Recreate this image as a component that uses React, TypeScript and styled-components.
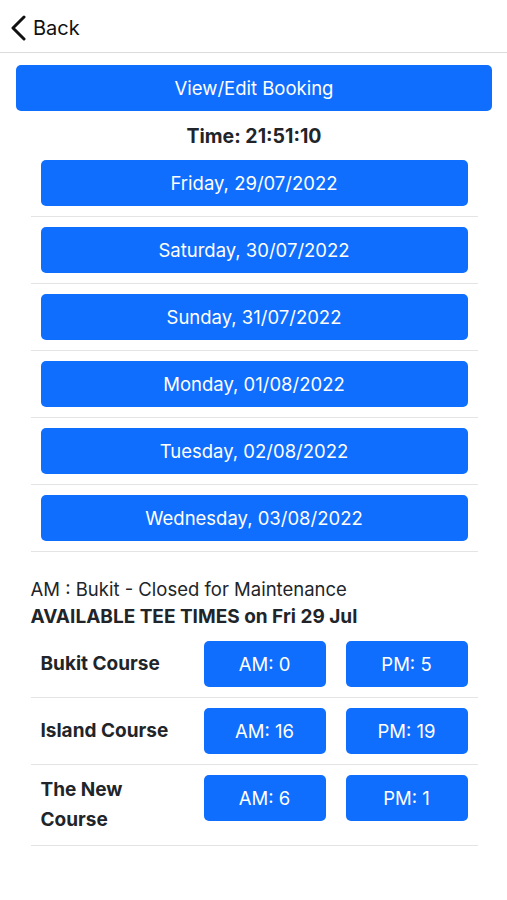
import styled, { createGlobalStyle } from "styled-components";

const GlobalStyle = createGlobalStyle`
  body {
    margin: 0;
    background: #fff;
    font-family: Inter, "Liberation Sans", Arial, sans-serif;
    color: #212529;
  }
`;

const dates = [
  "Friday, 29/07/2022",
  "Saturday, 30/07/2022",
  "Sunday, 31/07/2022",
  "Monday, 01/08/2022",
  "Tuesday, 02/08/2022",
  "Wednesday, 03/08/2022",
];

const courses = [
  { name: "Bukit Course", am: 0, pm: 5 },
  { name: "Island Course", am: 16, pm: 19 },
  { name: "The New Course", am: 6, pm: 1 },
];

function App() {
  return (
    <Page>
      <GlobalStyle />
      <Header>
        <BackButton>
          <svg width="18" height="26" viewBox="0 0 18 26" fill="none">
            <path d="M14 2 L3 13 L14 24" stroke="#111" strokeWidth="3" strokeLinecap="round" strokeLinejoin="round" />
          </svg>
          Back
        </BackButton>
      </Header>
      <Content>
        <WideButton>View/Edit Booking</WideButton>
        <Clock>Time: 21:51:10</Clock>
        <List>
          {dates.map((d) => (
            <DateRow key={d}>
              <Btn>{d}</Btn>
            </DateRow>
          ))}
        </List>
        <Notice>AM : Bukit - Closed for Maintenance</Notice>
        <Heading>AVAILABLE TEE TIMES on Fri 29 Jul</Heading>
        <List>
          {courses.map((c) => (
            <CourseRow key={c.name}>
              <CourseName>
                <span>{c.name}</span>
              </CourseName>
              <SlotButton>AM: {c.am}</SlotButton>
              <SlotButton>PM: {c.pm}</SlotButton>
            </CourseRow>
          ))}
        </List>
      </Content>
    </Page>
  );
}

const Page = styled.div`
  width: 507px;
  min-height: 900px;
`;

const Header = styled.div`
  height: 53px;
  border-bottom: 1px solid #dcdcdc;
  display: flex;
  align-items: center;
  padding-left: 10px;
  box-sizing: border-box;
`;

const BackButton = styled.div`
  display: flex;
  align-items: center;
  gap: 5px;
  font-size: 20px;
  color: #111;
  margin-top: 4px;
`;

const Content = styled.div`
  padding: 12px 15px 0 16px;
  display: flex;
  flex-direction: column;
  align-items: center;
`;

const Btn = styled.div`
  background: #0f6efd;
  color: #fff;
  border-radius: 5px;
  height: 46px;
  display: flex;
  align-items: center;
  justify-content: center;
  font-size: 18.5px;
`;

const WideButton = styled(Btn)`
  width: 100%;
`;

const Clock = styled.div`
  font-weight: 700;
  font-size: 19.5px;
  margin-top: 13px;
  margin-bottom: 12px;
`;

const List = styled.div`
  width: 447px;
`;

const DateRow = styled.div`
  border-bottom: 1px solid #e4e4e4;
  padding: 10px 10px;
  &:first-child {
    padding-top: 0;
  }
`;

const Notice = styled.div`
  width: 447px;
  font-size: 18.5px;
  margin-top: 25px;
  line-height: 24px;
`;

const Heading = styled.div`
  width: 447px;
  font-weight: 700;
  font-size: 19px;
  line-height: 24px;
  margin-top: 4px;
  margin-bottom: 12px;
`;

const CourseRow = styled.div`
  display: flex;
  align-items: flex-start;
  gap: 20px;
  padding: 10px;
  border-bottom: 1px solid #e4e4e4;
  &:first-child {
    padding-top: 0;
  }
`;

const CourseName = styled.div`
  flex: 1;
  min-height: 46px;
  display: flex;
  align-items: center;
  font-weight: 700;
  font-size: 19px;
  line-height: 30px;
  padding-right: 4px;
`;

const SlotButton = styled(Btn)`
  width: 122px;
`;

export default App;
